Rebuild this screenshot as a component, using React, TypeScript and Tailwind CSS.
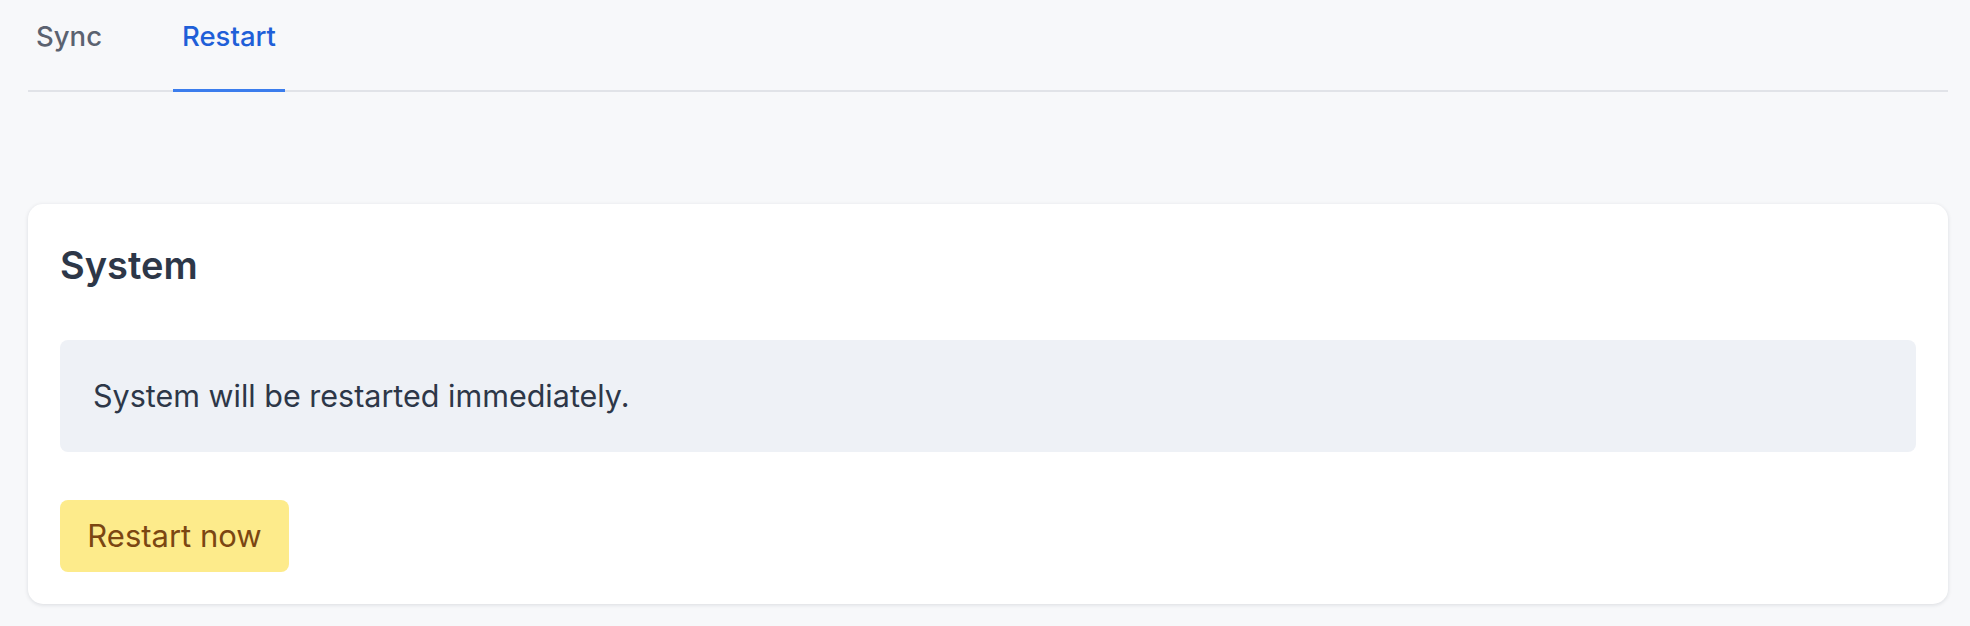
import React from "react";

export default function App() {
  return (
    <div className="min-h-[626px] w-full bg-[#f7f8fa] pl-[28px] pr-[22px] pt-[19px]" style={{ fontFamily: "Inter, 'Noto Sans', sans-serif" }}>
      <div className="flex border-b-[2px] border-[#e1e3e8]">
        <div className="w-[145px] pl-[8px] pb-[36px] text-[27.5px] leading-[34px] font-medium text-[#5b6270] -mb-[2px]">Sync</div>
        <div className="w-[112px] text-center pb-[36px] text-[27.5px] leading-[34px] font-medium text-[#1f5fd8] border-b-[3px] border-[#3b7ded] -mb-[2px]">Restart</div>
      </div>
      <div className="mt-[112px] rounded-[15px] bg-white px-[32px] pt-[39px] pb-[32px] shadow-[0_1px_4px_rgba(15,23,42,0.12)]">
        <h2 className="text-[38px] leading-[44px] font-semibold text-[#2d3748]">System</h2>
        <div className="mt-[53px] h-[112px] flex items-center rounded-[8px] bg-[#eef1f6] pl-[33px] text-[30.5px] text-[#2d3748]">
          System will be restarted immediately.
        </div>
        <button className="mt-[48px] h-[72px] w-[229px] rounded-[8px] bg-[#fdeb8b] text-[31px] text-[#7b4612]">Restart now</button>
      </div>
    </div>
  );
}
